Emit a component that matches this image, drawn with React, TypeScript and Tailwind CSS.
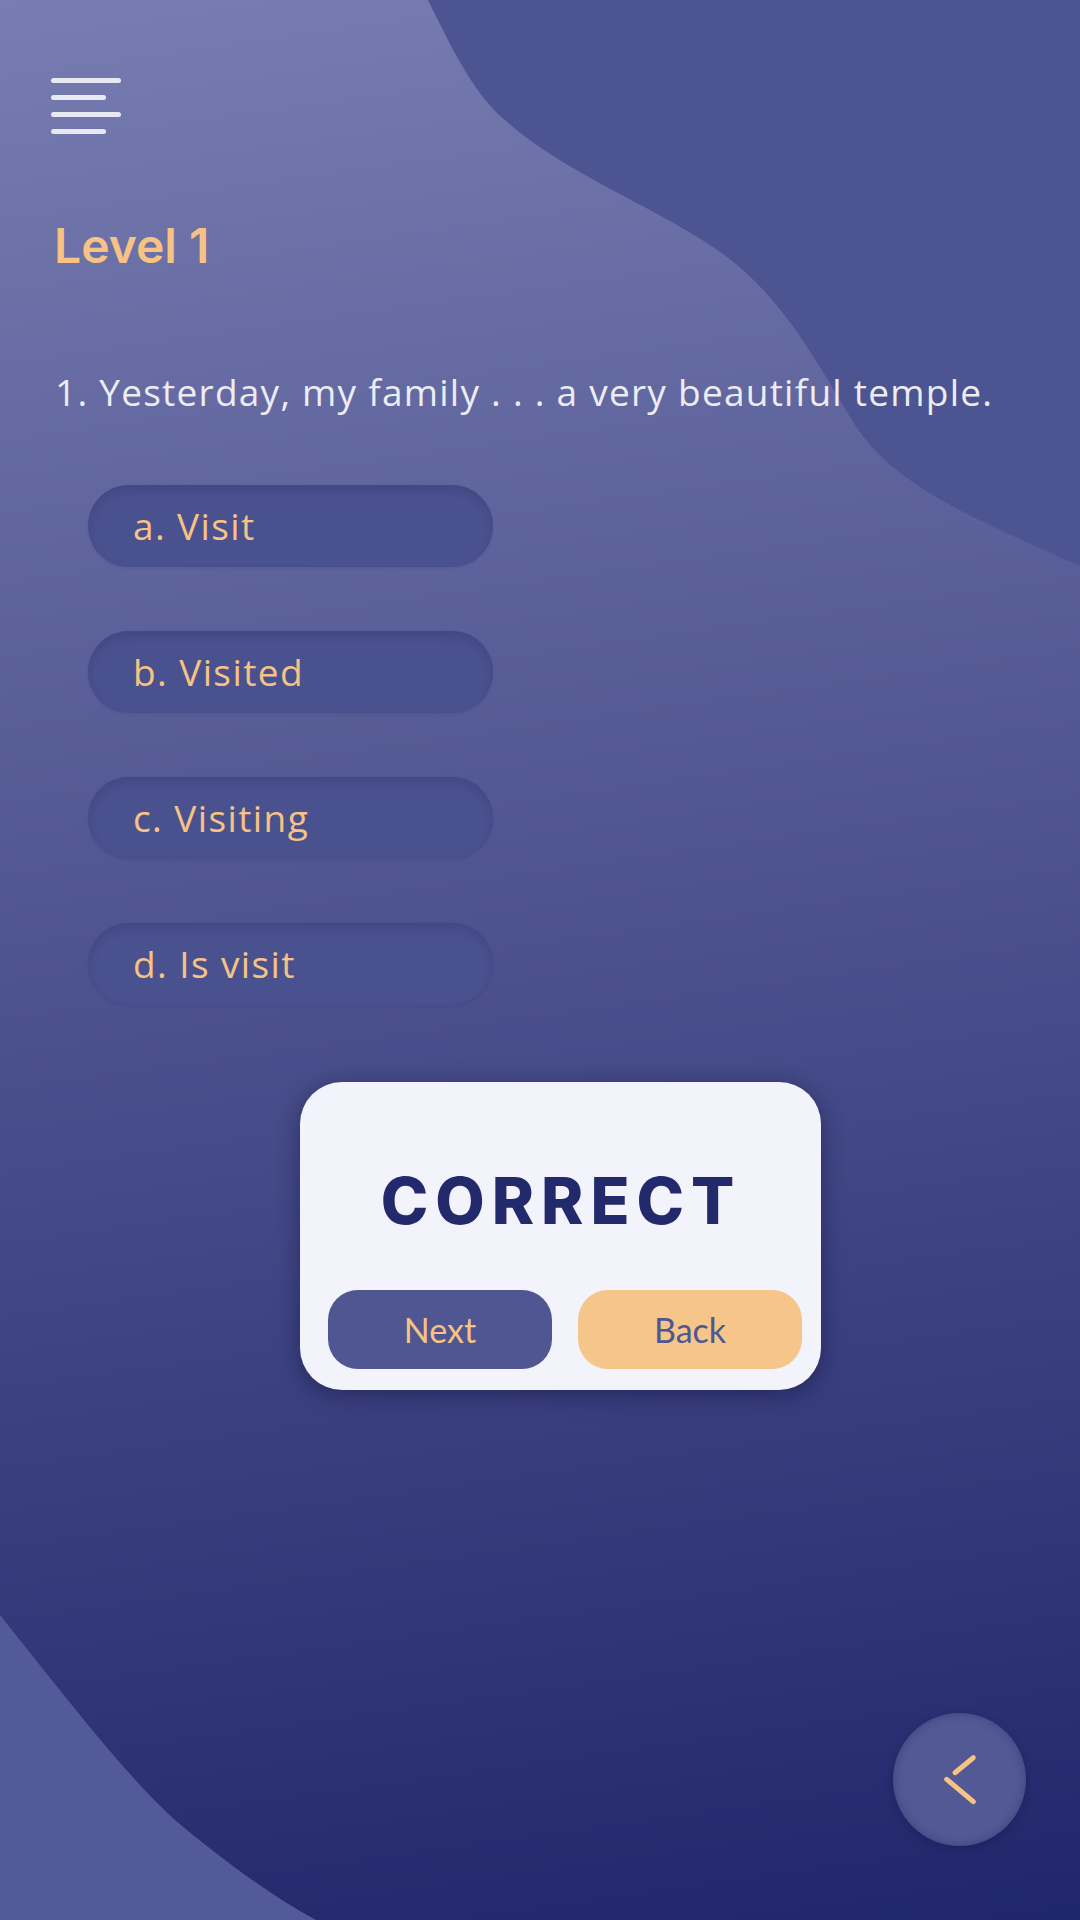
import React, { useState } from 'react';

const options = ['a. Visit', 'b. Visited', 'c. Visiting', 'd. Is visit'];

const Backdrop: React.FC = () => (
  <svg className="absolute inset-0 h-full w-full" viewBox="0 0 1080 1920" preserveAspectRatio="none">
    <path
      d="M428 0 C455 55 475 95 505 120 C560 170 650 205 710 245 C780 290 815 360 855 425 C895 485 965 515 1080 566 L1080 0 Z"
      fill="#4C5492"
    />
    <path d="M0 1615 C60 1690 125 1775 175 1820 C225 1862 272 1896 316 1920 L0 1920 Z" fill="#535A99" />
  </svg>
);

const App: React.FC = () => {
  const [picked, setPicked] = useState<number>(1);

  return (
    <div className="relative h-[1920px] w-[1080px] overflow-hidden bg-[linear-gradient(172deg,#777CB1_0%,#20266A_100%)] font-['Open_Sans',sans-serif]">
      <Backdrop />

      <div className="relative flex flex-col">
        {/* menu */}
        <button className="ml-[51px] mt-[78px] flex w-[70px] flex-col gap-[12px]">
          <span className="h-[5px] w-[70px] rounded-full bg-[#E8E8F0]" />
          <span className="h-[5px] w-[55px] rounded-full bg-[#E8E8F0]" />
          <span className="h-[5px] w-[70px] rounded-full bg-[#E8E8F0]" />
          <span className="h-[5px] w-[55px] rounded-full bg-[#E8E8F0]" />
        </button>

        <h1 className="ml-[54px] mt-[88px] font-['Inter',sans-serif] text-[48px] font-semibold leading-none text-[#F6C384]">
          Level 1
        </h1>

        <p className="ml-[55px] mt-[103px] text-[37px] font-normal leading-none tracking-[1.25px] text-[#ECECF4]">
          1. Yesterday, my family . . . a very beautiful temple.
        </p>

        <div className="ml-[88px] mt-[75px] flex flex-col gap-[64px]">
          {options.map((opt, i) => (
            <button
              key={opt}
              onClick={() => setPicked(i)}
              className="flex h-[82px] w-[405px] items-center rounded-full bg-[#4A518F] pl-[45px] text-left text-[37px] font-normal tracking-[1.4px] text-[#F6C384] shadow-[inset_0_5px_8px_rgba(30,34,80,0.18),0_1px_3px_rgba(30,34,80,0.12)]"
            >
              {opt}
            </button>
          ))}
        </div>

        {/* result popup */}
        <div className="ml-[300px] mt-[77px] flex h-[308px] w-[521px] flex-col rounded-[42px] bg-[#F3F3FC] pb-[21px] pl-[28px] pr-[19px] shadow-[0_4px_22px_rgba(10,12,50,0.45)]">
          <div className="flex flex-1 items-start justify-center pt-[87px] pr-[8px]">
            <span className="font-['Inter',sans-serif] text-[64px] font-extrabold leading-none tracking-[7px] text-[#232A6C]">
              {picked >= 0 ? 'CORRECT' : ''}
            </span>
          </div>
          <div className="flex gap-[26px]">
            <button className="flex h-[79px] w-[225px] items-center justify-center rounded-[30px] bg-[#4F5692] font-['Lato',sans-serif] text-[34px] text-[#F6C384]">
              Next
            </button>
            <button className="flex h-[79px] w-[225px] items-center justify-center rounded-[30px] bg-[#F6C589] font-['Lato',sans-serif] text-[34px] text-[#4F5692]">
              Back
            </button>
          </div>
        </div>
      </div>

      {/* floating back button */}
      <button className="absolute bottom-[74px] right-[54px] h-[133px] w-[133px] rounded-full bg-[#525995] shadow-[inset_0_0_10px_rgba(20,24,70,0.35),0_3px_8px_rgba(10,12,50,0.25)]">
        <svg viewBox="0 0 133 133" className="h-full w-full" fill="none" stroke="#F6C384" strokeWidth="5" strokeLinecap="round">
          <path d="M80.3 44.7 L62 59.7" />
          <path d="M53.7 66.3 L80.3 88.7" />
        </svg>
      </button>
    </div>
  );
};

export default App;
